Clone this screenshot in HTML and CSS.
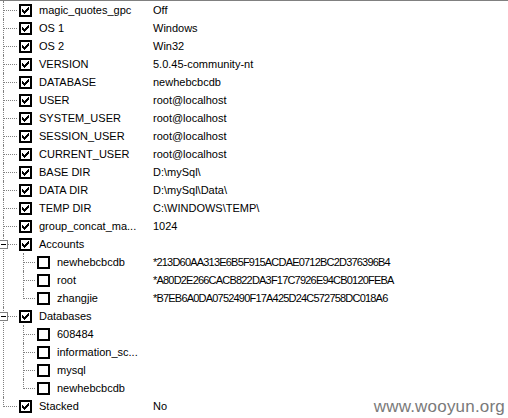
FILE: index.html
```html
<!DOCTYPE html>
<html>
<head>
<meta charset="utf-8">
<link rel="stylesheet" href="styles.css">
</head>
<body>
<div class="page">
  <ul class="tree">
    <li><div class="row"><span class="main"><span class="cb on"><svg viewBox="0 0 13 13"><path d="M9 3h1v1H9z M8 4h2v1H8z M3 5h1v1H3z M7 5h3v1H7z M3 6h2v1H3z M6 6h3v1H6z M3 7h5v1H3z M4 8h3v1H4z M5 9h1v1H5z"/></svg></span><span class="label">magic_quotes_gpc</span></span><span class="val">Off</span></div></li>
    <li><div class="row"><span class="main"><span class="cb on"><svg viewBox="0 0 13 13"><path d="M9 3h1v1H9z M8 4h2v1H8z M3 5h1v1H3z M7 5h3v1H7z M3 6h2v1H3z M6 6h3v1H6z M3 7h5v1H3z M4 8h3v1H4z M5 9h1v1H5z"/></svg></span><span class="label">OS 1</span></span><span class="val">Windows</span></div></li>
    <li><div class="row"><span class="main"><span class="cb on"><svg viewBox="0 0 13 13"><path d="M9 3h1v1H9z M8 4h2v1H8z M3 5h1v1H3z M7 5h3v1H7z M3 6h2v1H3z M6 6h3v1H6z M3 7h5v1H3z M4 8h3v1H4z M5 9h1v1H5z"/></svg></span><span class="label">OS 2</span></span><span class="val">Win32</span></div></li>
    <li><div class="row"><span class="main"><span class="cb on"><svg viewBox="0 0 13 13"><path d="M9 3h1v1H9z M8 4h2v1H8z M3 5h1v1H3z M7 5h3v1H7z M3 6h2v1H3z M6 6h3v1H6z M3 7h5v1H3z M4 8h3v1H4z M5 9h1v1H5z"/></svg></span><span class="label">VERSION</span></span><span class="val">5.0.45-community-nt</span></div></li>
    <li><div class="row"><span class="main"><span class="cb on"><svg viewBox="0 0 13 13"><path d="M9 3h1v1H9z M8 4h2v1H8z M3 5h1v1H3z M7 5h3v1H7z M3 6h2v1H3z M6 6h3v1H6z M3 7h5v1H3z M4 8h3v1H4z M5 9h1v1H5z"/></svg></span><span class="label">DATABASE</span></span><span class="val">newhebcbcdb</span></div></li>
    <li><div class="row"><span class="main"><span class="cb on"><svg viewBox="0 0 13 13"><path d="M9 3h1v1H9z M8 4h2v1H8z M3 5h1v1H3z M7 5h3v1H7z M3 6h2v1H3z M6 6h3v1H6z M3 7h5v1H3z M4 8h3v1H4z M5 9h1v1H5z"/></svg></span><span class="label">USER</span></span><span class="val">root@localhost</span></div></li>
    <li><div class="row"><span class="main"><span class="cb on"><svg viewBox="0 0 13 13"><path d="M9 3h1v1H9z M8 4h2v1H8z M3 5h1v1H3z M7 5h3v1H7z M3 6h2v1H3z M6 6h3v1H6z M3 7h5v1H3z M4 8h3v1H4z M5 9h1v1H5z"/></svg></span><span class="label">SYSTEM_USER</span></span><span class="val">root@localhost</span></div></li>
    <li><div class="row"><span class="main"><span class="cb on"><svg viewBox="0 0 13 13"><path d="M9 3h1v1H9z M8 4h2v1H8z M3 5h1v1H3z M7 5h3v1H7z M3 6h2v1H3z M6 6h3v1H6z M3 7h5v1H3z M4 8h3v1H4z M5 9h1v1H5z"/></svg></span><span class="label">SESSION_USER</span></span><span class="val">root@localhost</span></div></li>
    <li><div class="row"><span class="main"><span class="cb on"><svg viewBox="0 0 13 13"><path d="M9 3h1v1H9z M8 4h2v1H8z M3 5h1v1H3z M7 5h3v1H7z M3 6h2v1H3z M6 6h3v1H6z M3 7h5v1H3z M4 8h3v1H4z M5 9h1v1H5z"/></svg></span><span class="label">CURRENT_USER</span></span><span class="val">root@localhost</span></div></li>
    <li><div class="row"><span class="main"><span class="cb on"><svg viewBox="0 0 13 13"><path d="M9 3h1v1H9z M8 4h2v1H8z M3 5h1v1H3z M7 5h3v1H7z M3 6h2v1H3z M6 6h3v1H6z M3 7h5v1H3z M4 8h3v1H4z M5 9h1v1H5z"/></svg></span><span class="label">BASE DIR</span></span><span class="val">D:\mySql\</span></div></li>
    <li><div class="row"><span class="main"><span class="cb on"><svg viewBox="0 0 13 13"><path d="M9 3h1v1H9z M8 4h2v1H8z M3 5h1v1H3z M7 5h3v1H7z M3 6h2v1H3z M6 6h3v1H6z M3 7h5v1H3z M4 8h3v1H4z M5 9h1v1H5z"/></svg></span><span class="label">DATA DIR</span></span><span class="val">D:\mySql\Data\</span></div></li>
    <li><div class="row"><span class="main"><span class="cb on"><svg viewBox="0 0 13 13"><path d="M9 3h1v1H9z M8 4h2v1H8z M3 5h1v1H3z M7 5h3v1H7z M3 6h2v1H3z M6 6h3v1H6z M3 7h5v1H3z M4 8h3v1H4z M5 9h1v1H5z"/></svg></span><span class="label">TEMP DIR</span></span><span class="val">C:\WINDOWS\TEMP\</span></div></li>
    <li><div class="row"><span class="main"><span class="cb on"><svg viewBox="0 0 13 13"><path d="M9 3h1v1H9z M8 4h2v1H8z M3 5h1v1H3z M7 5h3v1H7z M3 6h2v1H3z M6 6h3v1H6z M3 7h5v1H3z M4 8h3v1H4z M5 9h1v1H5z"/></svg></span><span class="label">group_concat_ma...</span></span><span class="val">1024</span></div></li>
    <li class="parent"><span class="toggle"></span><div class="row"><span class="main"><span class="cb on"><svg viewBox="0 0 13 13"><path d="M9 3h1v1H9z M8 4h2v1H8z M3 5h1v1H3z M7 5h3v1H7z M3 6h2v1H3z M6 6h3v1H6z M3 7h5v1H3z M4 8h3v1H4z M5 9h1v1H5z"/></svg></span><span class="label">Accounts</span></span></div>
      <ul class="sub">
        <li><div class="row"><span class="main"><span class="cb"></span><span class="label">newhebcbcdb</span></span><span class="val hash">*213D60AA313E6B5F915ACDAE0712BC2D376396B4</span></div></li>
        <li><div class="row"><span class="main"><span class="cb"></span><span class="label">root</span></span><span class="val hash">*A80D2E266CACB822DA3F17C7926E94CB0120FEBA</span></div></li>
        <li><div class="row"><span class="main"><span class="cb"></span><span class="label">zhangjie</span></span><span class="val hash">*B7EB6A0DA0752490F17A425D24C572758DC018A6</span></div></li>
      </ul>
    </li>
    <li class="parent"><span class="toggle"></span><div class="row"><span class="main"><span class="cb on"><svg viewBox="0 0 13 13"><path d="M9 3h1v1H9z M8 4h2v1H8z M3 5h1v1H3z M7 5h3v1H7z M3 6h2v1H3z M6 6h3v1H6z M3 7h5v1H3z M4 8h3v1H4z M5 9h1v1H5z"/></svg></span><span class="label">Databases</span></span></div>
      <ul class="sub">
        <li><div class="row"><span class="main"><span class="cb"></span><span class="label">608484</span></span></div></li>
        <li><div class="row"><span class="main"><span class="cb"></span><span class="label">information_sc...</span></span></div></li>
        <li><div class="row"><span class="main"><span class="cb"></span><span class="label">mysql</span></span></div></li>
        <li><div class="row"><span class="main"><span class="cb"></span><span class="label">newhebcbcdb</span></span></div></li>
      </ul>
    </li>
    <li><div class="row"><span class="main"><span class="cb on"><svg viewBox="0 0 13 13"><path d="M9 3h1v1H9z M8 4h2v1H8z M3 5h1v1H3z M7 5h3v1H7z M3 6h2v1H3z M6 6h3v1H6z M3 7h5v1H3z M4 8h3v1H4z M5 9h1v1H5z"/></svg></span><span class="label">Stacked</span></span><span class="val">No</span></div></li>
  </ul>
  <div class="watermark">www.wooyun.org</div>
</div>
</body>
</html>
```

FILE: styles.css
```css
* { box-sizing: border-box; }
html, body {
  margin: 0;
  padding: 0;
  background: #fff;
}
.page {
  position: relative;
  width: 508px;
  height: 418px;
  overflow: hidden;
  border-top: 1px solid #808080;
  font-family: "Liberation Sans", Arial, sans-serif;
  font-size: 11px;
  color: #000;
}
ul {
  list-style: none;
  margin: 0;
  padding: 0;
}
li {
  position: relative;
}
.row {
  display: flex;
  align-items: center;
  height: 18px;
  white-space: nowrap;
}
.main {
  display: flex;
  align-items: center;
  width: 153px;
  flex: none;
  padding-left: 19px;
}
.sub .main {
  padding-left: 37px;
}
.label {
  margin-left: 7px;
}
.val {
  flex: none;
}
.hash {
  letter-spacing: -0.8px;
}
.cb {
  width: 13px;
  height: 13px;
  flex: none;
  border: 2px solid #000;
  background: #fff;
  position: relative;
}
.cb svg {
  position: absolute;
  left: -2px;
  top: -2px;
  width: 13px;
  height: 13px;
  shape-rendering: crispEdges;
  fill: #000;
}
/* tree lines */
.tree > li::before,
.sub > li::before {
  content: "";
  position: absolute;
  top: 9px;
  height: 0;
  border-top: 1px dotted #808080;
}
.tree > li::after,
.sub > li::after {
  content: "";
  position: absolute;
  top: 0;
  bottom: 0;
  width: 0;
  border-left: 1px dotted #808080;
}
.tree > li::before { left: 4px; width: 13px; }
.tree > li::after { left: 3px; }
.sub > li::before { left: 24px; width: 11px; }
.sub > li::after { left: 23px; }
.tree > li:last-child::after,
.sub > li:last-child::after {
  bottom: auto;
  height: 10px;
}
.toggle {
  position: absolute;
  left: -1px;
  top: 5px;
  width: 9px;
  height: 9px;
  border: 1px solid #808080;
  background: #fff;
  z-index: 1;
}
.toggle::after {
  content: "";
  position: absolute;
  left: 1px;
  top: 3px;
  width: 5px;
  height: 1px;
  background: #000;
}
.watermark {
  position: absolute;
  right: 3px;
  bottom: 1px;
  font-family: "Liberation Sans", Arial, sans-serif;
  font-size: 17px;
  color: #7a7a7a;
  letter-spacing: 0.2px;
}
```
